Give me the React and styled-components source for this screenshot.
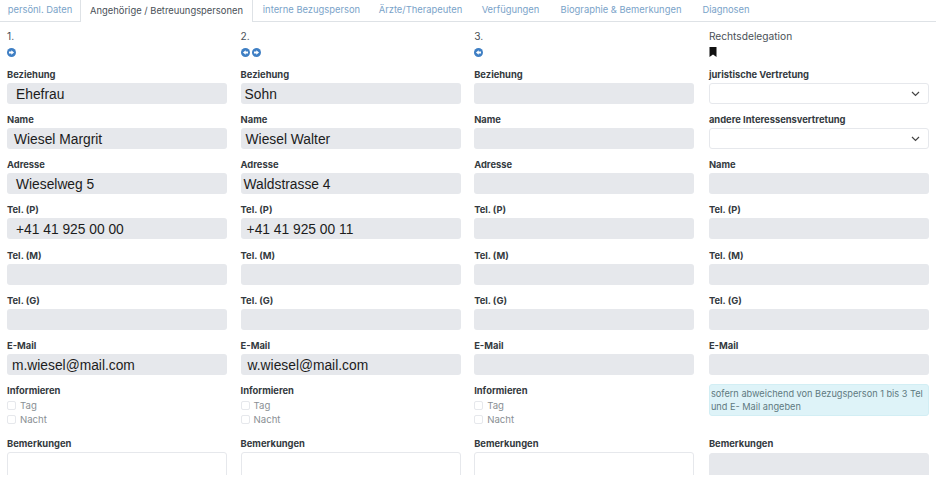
import React from "react";
import styled, { createGlobalStyle } from "styled-components";

const Global = createGlobalStyle`
  html, body { margin: 0; padding: 0; background: #fff; }
  body { font-family: Inter, "Open Sans", sans-serif; }
`;
const Page = styled.div`
  width: 936px; height: 475px; overflow: hidden; background: #fff;
`;
const Tabs = styled.nav`
  display: flex; height: 21px; border-bottom: 1px solid #dee2e6;
`;
const Tab = styled.div`
  height: ${p => (p.$active ? "22px" : "21px")};
  padding-bottom: 2px;
  display: flex; align-items: center; justify-content: center;
  width: ${p => p.$w}px; box-sizing: border-box; flex: none;
  font-size: 9.4px; white-space: nowrap;
  color: ${p => (p.$active ? "#495057" : "#7aa3c9")};
  background: #fff;
  ${p => p.$active && "border-left: 1px solid #dee2e6; border-right: 1px solid #dee2e6;"}
`;
const Grid = styled.main`
  display: grid; grid-template-columns: repeat(4, 220.2px); column-gap: 13.4px;
  padding: 8px 0 0 7px;
`;
const Column = styled.section`
  display: flex; flex-direction: column;
`;
const SideColumn = styled(Column)`
  margin-left: 1.2px; margin-right: -1px;
`;
const Heading = styled.div`
  font-size: 10.2px; line-height: 12px; height: 12px; color: #495057;
`;
const IconRow = styled.div`
  display: flex; gap: 2.5px; height: 10px; margin-top: 5px; margin-bottom: 12px; align-items: center;
`;
const Field = styled.div`
  display: flex; flex-direction: column; height: 45.17px; flex: none;
`;
const Label = styled.label`
  font-size: 9.4px; font-weight: 700; line-height: 12px; height: 12px; margin-bottom: 2px; color: #343a40; white-space: nowrap;
`;
const Value = styled.div`
  height: 21px; box-sizing: border-box; background: #e6e8ec; border-radius: 3px;
  display: flex; align-items: center; padding-left: ${p => p.$pad ?? 8}px; padding-top: 2px;
  font-family: "Liberation Sans", Arial, sans-serif; font-size: 13.8px; color: #1c1c1c;
`;
const Select = styled.div`
  height: 21px; box-sizing: border-box; background: #fff; border: 1px solid #e6e8ec; border-radius: 3px;
  display: flex; align-items: center; justify-content: flex-end; padding-right: 8px;
`;
const Checks = styled.div`
  display: flex; flex-direction: column; height: 53px; flex: none;
`;
const CheckLabel = styled(Label)`
  margin-bottom: 1px;
`;
const CheckRow = styled.div`
  display: flex; align-items: center; gap: 4px; height: 14.5px;
  font-size: 9.6px; color: #8a8f94;
`;
const Box = styled.span`
  width: 9px; height: 9px; box-sizing: border-box; border: 1px solid #e6e8ec; border-radius: 2px; background: #fff;
`;
const Area = styled.div`
  height: 40px; box-sizing: border-box; border: 1px solid #e6e8ec; border-radius: 3px; background: #fff;
`;
const GreyArea = styled(Area)`
  background: #e6e8ec; margin-top: 1px;
`;
const Note = styled.div`
  height: 32px; box-sizing: border-box; background: #def3f8; border: 1px solid #d2eef4; border-radius: 3px;
  padding: 2px 1px; font-size: 9.2px; line-height: 13px; color: #5f7a80; margin-top: -1px; margin-bottom: 22px;
`;

const Arrow = ({ dir }) => (
  <svg width="9" height="9" viewBox="0 0 10 10">
    <circle cx="5" cy="5" r="5" fill="#3f7fc4" />
    {dir === "right"
      ? <path d="M2.2 4h2.6V2.4L7.8 5 4.8 7.6V6H2.2z" fill="#fff" />
      : <path d="M7.8 4H5.2V2.4L2.2 5l3 2.6V6h2.6z" fill="#fff" />}
  </svg>
);
const Bookmark = () => (
  <svg width="8" height="10" viewBox="0 0 8 10"><path d="M0.5 0h7v10L4 7.4 0.5 10z" fill="#111" /></svg>
);
const Chevron = () => (
  <svg width="9" height="6" viewBox="0 0 9 6" fill="none" stroke="#444" strokeWidth="1.2"><path d="M1 1l3.5 3.5L8 1" /></svg>
);

const labels = ["Beziehung", "Name", "Adresse", "Tel. (P)", "Tel. (M)", "Tel. (G)", "E-Mail"];
const people = [
  { heading: "1.", icons: ["right"], values: [["Ehefrau", 9], ["Wiesel Margrit", 7], ["Wieselweg 5", 9], ["+41 41 925 00 00", 9], [""], [""], ["m.wiesel@mail.com", 5]] },
  { heading: "2.", icons: ["left", "right"], values: [["Sohn", 4], ["Wiesel Walter", 5], ["Waldstrasse 4", 3], ["+41 41 925 00 11", 6], [""], [""], ["w.wiesel@mail.com", 7]] },
  { heading: "3.", icons: ["left"], values: [[""], [""], [""], [""], [""], [""], [""]] },
];
const tabs = [
  ["persönl. Daten", 80], ["Angehörige / Betreuungspersonen", 173, true], ["interne Bezugsperson", 117],
  ["Ärzte/Therapeuten", 101], ["Verfügungen", 79], ["Biographie & Bemerkungen", 142], ["Diagnosen", 68],
];

export default function App() {
  return (
    <Page>
      <Global />
      <Tabs>
        {tabs.map(([t, w, a]) => <Tab key={t} $w={w} $active={a}>{t}</Tab>)}
      </Tabs>
      <Grid>
        {people.map(p => (
          <Column key={p.heading}>
            <Heading>{p.heading}</Heading>
            <IconRow>{p.icons.map((d, i) => <Arrow key={i} dir={d} />)}</IconRow>
            {labels.map((l, i) => (
              <Field key={l}>
                <Label>{l}</Label>
                <Value $pad={p.values[i][1]}>{p.values[i][0]}</Value>
              </Field>
            ))}
            <Checks>
              <CheckLabel>Informieren</CheckLabel>
              <CheckRow><Box />Tag</CheckRow>
              <CheckRow><Box />Nacht</CheckRow>
            </Checks>
            <Label>Bemerkungen</Label>
            <Area />
          </Column>
        ))}
        <SideColumn>
          <Heading>Rechtsdelegation</Heading>
          <IconRow><Bookmark /></IconRow>
          <Field><Label>juristische Vertretung</Label><Select><Chevron /></Select></Field>
          <Field><Label>andere Interessensvertretung</Label><Select><Chevron /></Select></Field>
          {["Name", "Tel. (P)", "Tel. (M)", "Tel. (G)", "E-Mail"].map(l => (
            <Field key={l}><Label>{l}</Label><Value /></Field>
          ))}
          <Note>sofern abweichend von Bezugsperson 1 bis 3 Tel und E- Mail angeben</Note>
          <Label>Bemerkungen</Label>
          <GreyArea />
        </SideColumn>
      </Grid>
    </Page>
  );
}
